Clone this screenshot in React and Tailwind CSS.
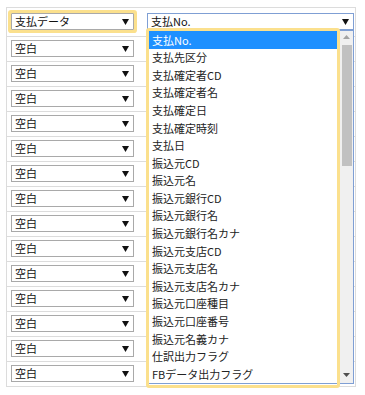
import React from 'react';

const options = [
  '支払No.',
  '支払先区分',
  '支払確定者CD',
  '支払確定者名',
  '支払確定日',
  '支払確定時刻',
  '支払日',
  '振込元CD',
  '振込元名',
  '振込元銀行CD',
  '振込元銀行名',
  '振込元銀行名カナ',
  '振込元支店CD',
  '振込元支店名',
  '振込元支店名カナ',
  '振込元口座種目',
  '振込元口座番号',
  '振込元名義カナ',
  '仕訳出力フラグ',
  'FBデータ出力フラグ',
];

const Arrow = ({ color = '#111' }) => (
  <svg width="7" height="6" viewBox="0 0 7 6">
    <path d="M0 0h7L3.5 6z" fill={color} />
  </svg>
);

const FakeSelect = ({ label, focused, highlight }) => (
  <div
    className={`flex h-[17px] items-center justify-between bg-white pl-[3px] pr-[4px] border ${
      focused ? 'border-[#7f9fd4]' : 'border-[#a9a9a9]'
    } ${highlight ? 'ring-[3px] ring-[#fbe08d] rounded-[1px]' : ''}`}
  >
    <span className="leading-none text-[#111]">{label}</span>
    <Arrow />
  </div>
);

const App = () => {
  const rows = Array.from({ length: 14 });

  return (
    <div
      className="min-h-screen bg-white pt-[7px] pl-[6px] text-[11px]"
      style={{ fontFamily: '"Noto Sans CJK JP", "Noto Sans", sans-serif' }}
    >
      <div className="relative w-[350px] border-x border-t border-[#dcdcdc]">
        {/* header row */}
        <div className="flex h-[29px] border-b border-[#dcdcdc]">
          <div className="w-[136px] pl-[4px] pr-[9px] pt-[5px]">
            <FakeSelect label="支払データ" highlight />
          </div>
          <div className="flex-1 pl-[4px] pr-[1px] pt-[5px]">
            <FakeSelect label="支払No." focused />
          </div>
        </div>

        {rows.map((_, i) => (
          <div key={i} className="flex h-[25px] border-b border-[#dcdcdc]">
            <div className="w-[136px] pl-[4px] pr-[9px] pt-[3px]">
              <FakeSelect label="空白" />
            </div>
            <div className="flex-1" />
          </div>
        ))}

        {/* open dropdown list */}
        <div className="absolute left-[140px] top-[22px] flex h-[354px] w-[207px] border border-[#7f9fd4] bg-white">
          <div className="flex-1">
            {options.map((opt, i) => (
              <div
                key={opt}
                className={`flex h-[17.6px] items-center pl-[4px] ${
                  i === 0 ? 'bg-[#1e90ff] text-white' : 'text-[#222]'
                }`}
              >
                {opt}
              </div>
            ))}
          </div>
          <div className="relative w-[13px] bg-[#f0f0f0]">
            <div className="absolute left-[3px] top-[4px]">
              <svg width="7" height="4" viewBox="0 0 7 4">
                <path d="M0 4h7L3.5 0z" fill="#a3a3a3" />
              </svg>
            </div>
            <div className="absolute left-[2px] top-[14px] h-[121px] w-[10px] bg-[#c1c1c1]" />
            <div className="absolute bottom-[6px] left-[3px]">
              <svg width="7" height="4" viewBox="0 0 7 4">
                <path d="M0 0h7L3.5 4z" fill="#505050" />
              </svg>
            </div>
          </div>
        </div>

        {/* highlight around list */}
        <div className="pointer-events-none absolute left-[139px] top-[20px] h-[360px] w-[194px] rounded-[3px] border-[3px] border-[#fbe08d]" />
      </div>
    </div>
  );
};

export default App;
